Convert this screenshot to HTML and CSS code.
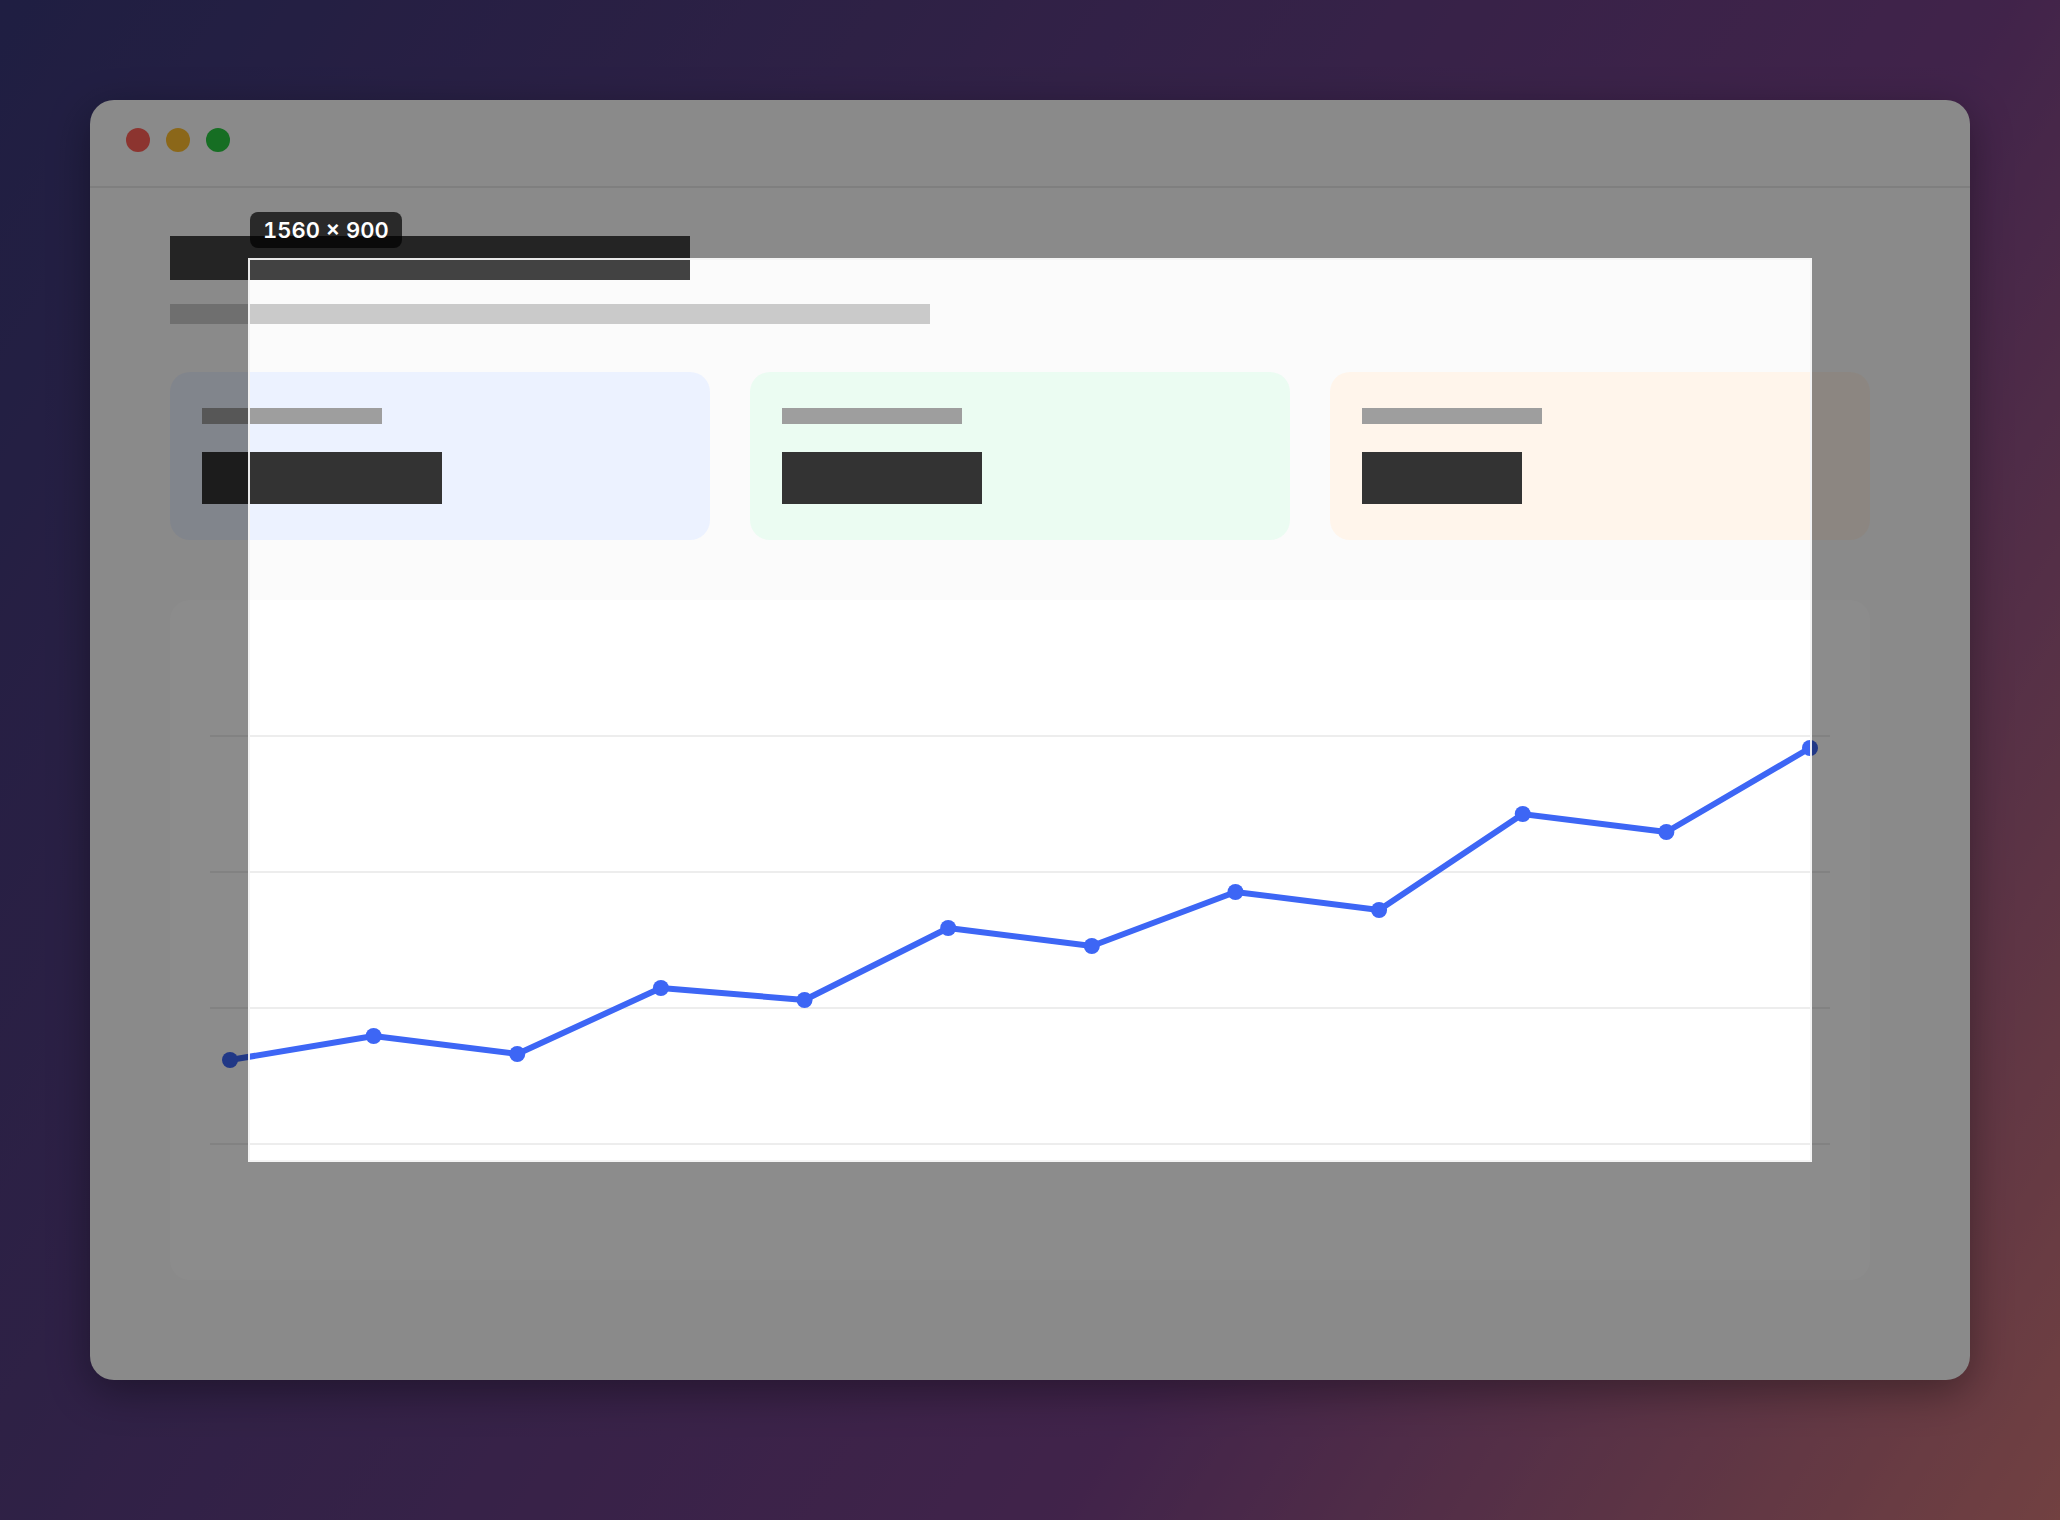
FILE: index.html
```
<!DOCTYPE html>
<html lang="en">
<head>
    <meta charset="UTF-8">
    <meta name="viewport" content="width=device-width, initial-scale=1.0">
    <title>Capture area</title>
    <link rel="stylesheet" href="styles.css">
</head>

<body>
  <main class="desktop">
    <div class="window">
      <div class="titlebar">
        <span class="dot dot-close"></span>
        <span class="dot dot-minimize"></span>
        <span class="dot dot-zoom"></span>
      </div>

      <div class="content">
        <div class="heading"></div>
        <div class="subheading"></div>

        <div class="cards">
          <div class="card card-blue">
            <div class="card-label"></div>
            <div class="card-value"></div>
          </div>
          <div class="card card-green">
            <div class="card-label"></div>
            <div class="card-value"></div>
          </div>
          <div class="card card-orange">
            <div class="card-label"></div>
            <div class="card-value"></div>
          </div>
        </div>

        <div class="chart">
          <svg class="chart-svg" viewBox="0 0 1700 680" role="img" aria-label="Line chart">
            <g class="grid">
              <path d="M40 136H1660"/>
              <path d="M40 272H1660"/>
              <path d="M40 408H1660"/>
              <path d="M40 544H1660"/>
            </g>
            <polyline id="line" class="line" points=""/>
            <g id="points" class="points"></g>
          </svg>
        </div>
      </div>
    </div>

    <!-- everything outside the selection is dimmed by its shadow -->
    <div class="selection">
      <span class="selection-size">1560 × 900</span>
    </div>
  </main>

  <script type="text/javascript">
    const values = [460, 436, 454, 388, 400, 328, 346, 292, 310, 214, 232, 148];
    const left = 60;
    const step = 1580 / (values.length - 1);
    const points = values.map((y, i) => [left + i * step, y]);

    document.getElementById("line").setAttribute("points", points.join(" "));

    points.forEach(([x, y]) => {
      const dot = document.createElementNS("http://www.w3.org/2000/svg", "circle");
      dot.setAttribute("cx", x);
      dot.setAttribute("cy", y);
      dot.setAttribute("r", 8);
      document.getElementById("points").appendChild(dot);
    });
  </script>
</body>
</html>
```

FILE: styles.css
```
* {
  box-sizing: border-box;
}

body {
  margin: 0;
  font-family: Inter, sans-serif;
}

.desktop {
  position: relative;
  min-height: 100vh;
  padding: 100px 90px 140px;
  overflow: hidden;
  background: linear-gradient(122deg, #393878 0%, #774188 67%, #cf7777 100%);
}

.window {
  padding-bottom: 100px;
  border-radius: 24px;
  background: #fbfbfb;
  box-shadow: 0 12px 40px rgba(0, 0, 0, 0.35);
}

.titlebar {
  display: flex;
  gap: 16px;
  height: 88px;
  padding: 28px 36px;
  border-bottom: 2px solid #e8e8e8;
}

.dot {
  width: 24px;
  height: 24px;
  border-radius: 50%;
}

.dot-close {
  background: #ff5f57;
}

.dot-minimize {
  background: #febc2e;
}

.dot-zoom {
  background: #28c840;
}

.content {
  padding: 48px 100px 0 80px;
}

.heading {
  width: 520px;
  height: 44px;
  background: #424242;
}

.subheading {
  width: 760px;
  height: 20px;
  margin-top: 24px;
  background: #cacaca;
}

.cards {
  display: grid;
  grid-template-columns: repeat(3, 1fr);
  gap: 40px;
  margin-top: 48px;
}

.card {
  padding: 36px 32px;
  border-radius: 20px;
}

.card-blue {
  background: #ecf2ff;
}

.card-green {
  background: #ebfcf2;
}

.card-orange {
  background: #fff5eb;
}

.card-label {
  width: 180px;
  height: 16px;
  background: #9e9e9e;
}

.card-value {
  width: 240px;
  height: 52px;
  margin-top: 28px;
  background: #333;
}

.card-green .card-value {
  width: 200px;
}

.card-orange .card-value {
  width: 160px;
}

.chart {
  margin-top: 60px;
  border-radius: 20px;
  background: #fff;
}

.chart-svg {
  display: block;
  width: 100%;
}

.grid {
  stroke: #ededed;
  stroke-width: 2;
}

.line {
  fill: none;
  stroke: #3d66f5;
  stroke-width: 6;
  stroke-linejoin: round;
}

.points {
  fill: #3d66f5;
}

.selection {
  position: absolute;
  top: 260px;
  left: 250px;
  right: 250px;
  height: 900px;
  outline: 2px solid rgba(255, 255, 255, 0.9);
  box-shadow: 0 0 0 3000px rgba(0, 0, 0, 0.45);
}

.selection-size {
  position: absolute;
  left: 0;
  bottom: calc(100% + 12px);
  padding: 0 13px;
  border-radius: 8px;
  background: rgba(0, 0, 0, 0.7);
  color: #fff;
  font-size: 22px;
  font-weight: 600;
  font-variant-numeric: tabular-nums;
  line-height: 36px;
  white-space: nowrap;
}
```
